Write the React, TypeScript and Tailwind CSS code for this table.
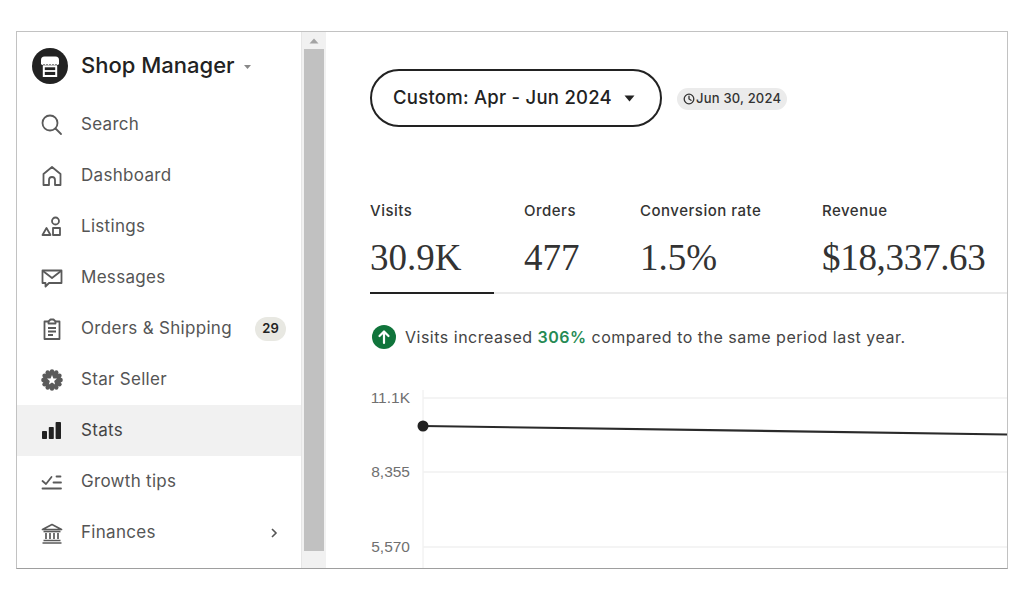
import React from "react";

const ic = "#5a5a5a";

function SearchIcon() {
  return (
    <svg width="24" height="24" viewBox="0 0 24 24" fill="none" stroke={ic} strokeWidth="1.8" strokeLinecap="round">
      <circle cx="10" cy="10" r="7.5" />
      <path d="M15.5 15.5 L21 21" />
    </svg>
  );
}
function HomeIcon() {
  return (
    <svg width="24" height="24" viewBox="0 0 24 24" fill="none" stroke={ic} strokeWidth="1.8" strokeLinejoin="round">
      <path d="M3.5 21 V10 L12 3 L20.5 10 V21 H15 V16 a3 3 0 0 0 -6 0 V21 Z" />
    </svg>
  );
}
function ListingsIcon() {
  return (
    <svg width="24" height="24" viewBox="0 0 24 24" fill="none" stroke={ic} strokeWidth="1.8" strokeLinejoin="round">
      <circle cx="15.5" cy="6" r="3.5" />
      <path d="M2.5 20 L6.5 13 L10.5 20 Z" />
      <rect x="13" y="13" width="7" height="7" />
    </svg>
  );
}
function MessageIcon() {
  return (
    <svg width="24" height="24" viewBox="0 0 24 24" fill="none" stroke={ic} strokeWidth="1.8" strokeLinejoin="round">
      <path d="M2.5 4.5 H21.5 V17 H9 L5.5 20.5 V17 H2.5 Z" />
      <path d="M3 5 L12 12 L21 5" />
    </svg>
  );
}
function ClipboardIcon() {
  return (
    <svg width="24" height="24" viewBox="0 0 24 24" fill="none" stroke={ic} strokeWidth="1.8" strokeLinejoin="round">
      <path d="M8.5 4.5 H4.5 V22 H19.5 V4.5 H15.5" />
      <path d="M8.5 6.5 V4.5 L10.5 2.5 H13.5 L15.5 4.5 V6.5 Z" />
      <path d="M8 11 H16 M8 14.5 H16 M8 18 H13" />
    </svg>
  );
}
function StarSellerIcon() {
  const bumps = Array.from({ length: 12 }, (_, i) => {
    const a = (i / 12) * Math.PI * 2;
    return { x: 12 + Math.cos(a) * 8.6, y: 12 + Math.sin(a) * 8.6 };
  });
  return (
    <svg width="24" height="24" viewBox="0 0 24 24">
      <circle cx="12" cy="12" r="9" fill={ic} />
      {bumps.map((b, i) => (
        <circle key={i} cx={b.x} cy={b.y} r="2.2" fill={ic} />
      ))}
      <path
        d="M12 7 L13.4 10.4 L17 10.6 L14.2 12.9 L15.1 16.4 L12 14.5 L8.9 16.4 L9.8 12.9 L7 10.6 L10.6 10.4 Z"
        fill="#fff"
      />
    </svg>
  );
}
function StatsIcon() {
  return (
    <svg width="24" height="24" viewBox="0 0 24 24" fill="#222">
      <rect x="2" y="12" width="5" height="8" rx="0.8" />
      <rect x="8.8" y="8" width="5" height="12" rx="0.8" />
      <rect x="15.6" y="3" width="5.4" height="17" rx="0.8" />
    </svg>
  );
}
function GrowthIcon() {
  return (
    <svg width="24" height="24" viewBox="0 0 24 24" fill="none" stroke={ic} strokeWidth="1.8" strokeLinecap="round" strokeLinejoin="round">
      <path d="M2.5 11 L6 14 L11.5 7" />
      <path d="M16.5 6.5 H20.5" />
      <path d="M13.5 12.5 H21" />
      <path d="M2.5 18.5 H21" />
    </svg>
  );
}
function BankIcon() {
  return (
    <svg width="24" height="24" viewBox="0 0 24 24" fill="none" stroke={ic} strokeWidth="1.7" strokeLinejoin="round">
      <path d="M2.5 8.5 L12 3.5 L21.5 8.5 Z" />
      <path d="M3.5 10.5 H20.5" />
      <path d="M6 12 V18 M10 12 V18 M14 12 V18 M18 12 V18" />
      <path d="M3.5 19.5 H20.5 M2.5 22 H21.5" />
    </svg>
  );
}

function Logo() {
  return (
    <svg width="36" height="36" viewBox="0 0 36 36">
      <circle cx="18" cy="18" r="18" fill="#222" />
      <path
        d="M9 16 V12 Q9 8.5 12.5 8.5 H23.5 Q27 8.5 27 12 V16 Q25.5 17.8 24 16 Q22.5 17.8 21 16 Q19.5 17.8 18 16 Q16.5 17.8 15 16 Q13.5 17.8 12 16 Q10.5 17.8 9 16 Z"
        fill="#fff"
      />
      <rect x="11.8" y="18.3" width="12.4" height="9.7" fill="none" stroke="#fff" strokeWidth="2" />
      <path d="M11.8 23 H24.2" stroke="#fff" strokeWidth="1.8" />
    </svg>
  );
}

type Item = { label: string; icon: React.ReactNode; active?: boolean; badge?: string; chevron?: boolean };

const items: Item[] = [
  { label: "Search", icon: <SearchIcon /> },
  { label: "Dashboard", icon: <HomeIcon /> },
  { label: "Listings", icon: <ListingsIcon /> },
  { label: "Messages", icon: <MessageIcon /> },
  { label: "Orders & Shipping", icon: <ClipboardIcon />, badge: "29" },
  { label: "Star Seller", icon: <StarSellerIcon /> },
  { label: "Stats", icon: <StatsIcon />, active: true },
  { label: "Growth tips", icon: <GrowthIcon /> },
  { label: "Finances", icon: <BankIcon />, chevron: true },
];

function Sidebar() {
  return (
    <div className="w-[284px] shrink-0 flex flex-col bg-white">
      <div className="h-[67px] flex items-center pl-[15px] gap-[13px]">
        <Logo />
        <span className="text-[22px] font-medium text-[#222] tracking-[0px]">Shop Manager</span>
        <svg width="9" height="6" viewBox="0 0 9 6" className="ml-[-5px] mt-[2px]">
          <path d="M1 1 L4.5 5 L8 1 Z" fill="#888" />
        </svg>
      </div>
      {items.map((it) => (
        <div
          key={it.label}
          className={
            "h-[51px] flex items-center pl-[23px] pr-[15px] gap-[17px] " + (it.active ? "bg-[#f1f1f1]" : "")
          }
        >
          <div className="w-6 h-6 flex items-center justify-center">{it.icon}</div>
          <span className={"text-[17px] tracking-[0.3px] flex-1 " + (it.active ? "text-[#444]" : "text-[#555]")}>{it.label}</span>
          {it.badge && (
            <span className="h-[24px] w-[31px] rounded-full bg-[#e8e8e2] text-[13px] font-semibold text-[#222] flex items-center justify-center">
              {it.badge}
            </span>
          )}
          {it.chevron && (
            <svg width="8" height="12" viewBox="0 0 8 12" className="mr-[8px]">
              <path d="M2 2 L6 6 L2 10" fill="none" stroke="#555" strokeWidth="1.6" />
            </svg>
          )}
        </div>
      ))}
    </div>
  );
}

function Scrollbar() {
  return (
    <div className="w-[25px] shrink-0 bg-[#f1f1f1] border-l border-[#e6e6e6] flex flex-col items-center">
      <div className="h-[17px] flex items-center justify-center">
        <svg width="10" height="6" viewBox="0 0 10 6">
          <path d="M0.5 5.5 L5 0.5 L9.5 5.5 Z" fill="#a3a3a3" />
        </svg>
      </div>
      <div className="w-[20px] h-[502px] bg-[#c1c1c1]" />
    </div>
  );
}

function Chart() {
  return (
    <svg width="681" height="188" viewBox="0 0 681 188" className="block">
      <line x1="97" y1="10" x2="97" y2="188" stroke="#ececec" strokeWidth="1" />
      {[18, 92, 167].map((y) => (
        <line key={y} x1="97" y1={y} x2="681" y2={y} stroke="#f0f0f0" strokeWidth="1.5" />
      ))}
      <g fontFamily="'Liberation Sans', Arial, sans-serif" fontSize="15.5" fill="#707070" textAnchor="end">
        <text x="84" y="22.5">11.1K</text>
        <text x="84" y="96.5">8,355</text>
        <text x="84" y="171.5">5,570</text>
      </g>
      <line x1="97" y1="46" x2="681" y2="54.5" stroke="#2a2a2a" strokeWidth="2.2" />
      <circle cx="97" cy="46" r="5.5" fill="#222" />
    </svg>
  );
}

const valueCls = "mt-[15px] text-[37px] leading-[44px] text-[#333] font-['Liberation_Serif',serif]";
const labelCls = "text-[15px] font-medium text-[#333] leading-[20px] tracking-[0.5px]";

function Main() {
  return (
    <div className="flex-1 overflow-hidden bg-white flex flex-col">
      <div className="pl-[44px] pt-[37px] flex items-center">
        <div className="h-[58px] w-[292px] rounded-full border-2 border-[#222] flex items-center pl-[21px] gap-[12px]">
          <span className="text-[18.5px] font-medium text-[#222] tracking-[0.25px]">Custom: Apr - Jun 2024</span>
          <svg width="11" height="7" viewBox="0 0 11 7">
            <path d="M0.5 0.5 L10.5 0.5 L5.5 6.5 Z" fill="#222" />
          </svg>
        </div>
        <div className="ml-[15px] mt-[2px] h-[22px] px-[6px] rounded-full bg-[#ebebeb] flex items-center gap-[1px]">
          <svg width="12" height="12" viewBox="0 0 12 12" fill="none" stroke="#333" strokeWidth="1.3">
            <circle cx="6" cy="6" r="4.8" />
            <path d="M6 3.2 V6 L8 7.3" strokeLinecap="round" />
          </svg>
          <span className="text-[13px] font-medium text-[#333] tracking-[0.2px]">Jun 30, 2024</span>
        </div>
      </div>

      <div className="ml-[44px] mt-[74px] flex border-b-2 border-[#ebebeb]">
        <div className="w-[124px] mr-[30px] border-b-2 border-[#222] -mb-[2px] pb-[12px]">
          <div className={labelCls}>Visits</div>
          <div className={valueCls}>30.9K</div>
        </div>
        <div className="w-[116px] pb-[12px]">
          <div className={labelCls}>Orders</div>
          <div className={valueCls}>477</div>
        </div>
        <div className="w-[182px] pb-[12px]">
          <div className={labelCls}>Conversion rate</div>
          <div className={valueCls}>1.5%</div>
        </div>
        <div className="flex-1 pb-[12px] whitespace-nowrap">
          <div className={labelCls}>Revenue</div>
          <div className={valueCls + " tracking-[-0.3px]"}>$18,337.63</div>
        </div>
      </div>

      <div className="ml-[46px] mt-[31px] h-[24px] flex items-center gap-[9px]">
        <svg width="24" height="24" viewBox="0 0 24 24">
          <circle cx="12" cy="12" r="12" fill="#10743b" />
          <path d="M12 18 V7 M7.5 11 L12 6.5 L16.5 11" fill="none" stroke="#fff" strokeWidth="2.2" strokeLinecap="round" strokeLinejoin="round" />
        </svg>
        <span className="text-[16px] text-[#444] whitespace-nowrap tracking-[0.5px]">
          Visits increased <span className="font-semibold text-[#258a53]">306%</span> compared to the same period last year.
        </span>
      </div>

      <div className="mt-[31px]">
        <Chart />
      </div>
    </div>
  );
}

export default function App() {
  return (
    <div className="w-[1024px] h-[607px] bg-white font-['Inter','Liberation_Sans',sans-serif] overflow-hidden">
      <div className="ml-[16px] mt-[31px] w-[992px] h-[538px] border border-[#c2c2c2] border-b-[#9e9e9e] flex overflow-hidden">
        <Sidebar />
        <Scrollbar />
        <Main />
      </div>
    </div>
  );
}
